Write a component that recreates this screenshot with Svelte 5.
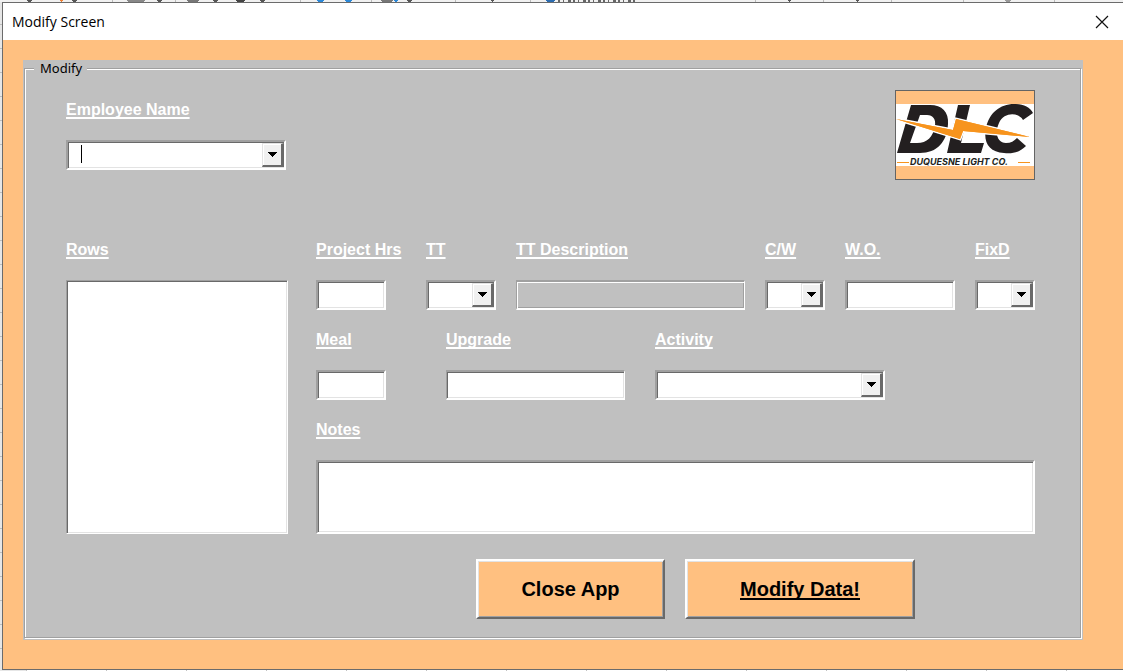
<script>
  const separators = [112, 175, 300, 371, 455, 530, 755, 823, 891, 963, 1054];
  const marks = [
    { x: 27, w: 5, c: '#555' },
    { x: 60, w: 3, c: '#ed7d31' },
    { x: 72, w: 5, c: '#555' },
    { x: 127, w: 18, c: '#888' },
    { x: 157, w: 5, c: '#555' },
    { x: 187, w: 12, c: '#777' },
    { x: 213, w: 5, c: '#555' },
    { x: 236, w: 9, c: '#444' },
    { x: 260, w: 5, c: '#555' },
    { x: 317, w: 7, c: '#2b88d8' },
    { x: 345, w: 7, c: '#2b88d8' },
    { x: 381, w: 12, c: '#777' },
    { x: 394, w: 4, c: '#2b88d8' },
    { x: 407, w: 5, c: '#555' },
    { x: 491, w: 3, c: '#555' },
    { x: 546, w: 9, c: '#2b6cb0' },
    { x: 788, w: 3, c: '#555' },
    { x: 856, w: 3, c: '#555' },
    { x: 1005, w: 6, c: '#999' }
  ];

  let employee = $state('');
  let row = $state('');
  let hours = $state('');
  let tt = $state('');
  let cw = $state('');
  let workOrder = $state('');
  let fixd = $state('');
  let meal = $state('');
  let upgrade = $state('');
  let activity = $state('');
  let notes = $state('');
</script>

{#snippet arrow()}
  <span class="arrow" aria-hidden="true">
    <svg width="10" height="5" viewBox="0 0 10 5" shape-rendering="crispEdges"><path d="M0 0H10L5 5Z" /></svg>
  </span>
{/snippet}

<div class="desktop">
  <svg class="ribbon" height="2" aria-hidden="true" shape-rendering="crispEdges">
    {#each separators as x}
      <rect {x} y="0" width="1" height="2" fill="#bbb" />
    {/each}
    {#each marks as m}
      <rect x={m.x} y="0" width={m.w} height="1" fill={m.c} />
      <rect x={m.x + 1} y="1" width={m.w - 2} height="1" fill={m.c} />
    {/each}
    <path d="M558 1H636" stroke="#666" stroke-width="2" stroke-dasharray="2 3 1 4 3 2" />
  </svg>

  <main class="dialog">
    <header class="titlebar">
      <h1>Modify Screen</h1>
      <button class="close" type="button" aria-label="Close">
        <svg width="14" height="14" viewBox="0 0 14 14"><path d="M1 1L13 13M13 1L1 13" stroke="#111" stroke-width="1.2" /></svg>
      </button>
    </header>

    <div class="surface">
      <div class="panel">
        <fieldset>
          <legend>Modify</legend>
          <div class="content">
            <div class="top">
              <div class="field employee">
                <label for="employee">Employee Name</label>
                <span class="combo">
                  <select id="employee" class="box" bind:value={employee}><option value=""></option></select>
                  {@render arrow()}
                  <span class="caret" aria-hidden="true"></span>
                </span>
              </div>
              <svg class="logo" width="140" height="90" viewBox="0 0 140 90" role="img" aria-label="Duquesne Light Co.">
                <rect width="140" height="90" fill="#ffc080" />
                <rect x="1" y="14" width="138" height="62" fill="#fff" />
                <g fill="#231f20">
                  <path fill-rule="evenodd" d="M16 15H35C47 15 54 22 53 34C52 52 42 63 25 63H2ZM25 25L15 53H22C32 53 38 47 40 36C41 29 38 25 32 25Z" />
                  <path d="M63 15H75L66 53H89L86 63H52Z" />
                  <path d="M138 23L128 30C123 22 109 22 104 33C99 44 103 53 111 53C116 53 119 51 122 48L131 56C125 62 118 64 109 63C94 62 88 52 91 38C94 23 105 14 119 14C128 14 135 17 138 23Z" />
                </g>
                <path d="M1 29L58 40L61 29L135 47L68 41L65 49Z" fill="#f7941d" stroke="#fff" stroke-width="3" paint-order="stroke" />
                <path d="M1 29L58 40L61 29L135 47L68 41L65 49Z" fill="#f7941d" />
                <path d="M2 72.500H14M123 72.500H135" stroke="#f7941d" />
                <text x="15" y="75">DUQUESNE LIGHT CO.</text>
                <rect x="0.500" y="0.500" width="139" height="89" fill="none" stroke="#646464" />
              </svg>
            </div>

            <div class="work">
              <div class="field rows">
                <label for="rows">Rows</label>
                <select id="rows" class="box list" size="8" bind:value={row}></select>
              </div>

              <div class="details">
                <div class="line first">
                  <div class="field">
                    <label for="hours">Project Hrs</label>
                    <input id="hours" class="box short" type="text" bind:value={hours} />
                  </div>
                  <div class="field">
                    <label for="tt">TT</label>
                    <span class="combo">
                      <select id="tt" class="box" bind:value={tt}><option value=""></option></select>
                      {@render arrow()}
                    </span>
                  </div>
                  <div class="field">
                    <label for="ttd">TT Description</label>
                    <input id="ttd" class="box locked" type="text" readonly />
                  </div>
                  <div class="field">
                    <label for="cw">C/W</label>
                    <span class="combo">
                      <select id="cw" class="box" bind:value={cw}><option value=""></option></select>
                      {@render arrow()}
                    </span>
                  </div>
                  <div class="field">
                    <label for="wo">W.O.</label>
                    <input id="wo" class="box" type="text" bind:value={workOrder} />
                  </div>
                  <div class="field">
                    <label for="fixd">FixD</label>
                    <span class="combo">
                      <select id="fixd" class="box" bind:value={fixd}><option value=""></option></select>
                      {@render arrow()}
                    </span>
                  </div>
                </div>

                <div class="line second">
                  <div class="field">
                    <label for="meal">Meal</label>
                    <input id="meal" class="box short" type="text" bind:value={meal} />
                  </div>
                  <div class="field">
                    <label for="upgrade">Upgrade</label>
                    <input id="upgrade" class="box thin" type="text" bind:value={upgrade} />
                  </div>
                  <div class="field">
                    <label for="activity">Activity</label>
                    <span class="combo">
                      <select id="activity" class="box" bind:value={activity}><option value=""></option></select>
                      {@render arrow()}
                    </span>
                  </div>
                </div>

                <div class="field notes">
                  <label for="notes">Notes</label>
                  <textarea id="notes" class="box" bind:value={notes}></textarea>
                </div>
              </div>
            </div>

            <div class="actions">
              <button class="action" type="button">Close App</button>
              <button class="action primary" type="button">Modify Data!</button>
            </div>
          </div>
        </fieldset>
      </div>
    </div>
  </main>
  <div class="sheet-edge" aria-hidden="true"></div>
</div>

<style>
  :global(body) {
    margin: 0;
  }

  * {
    box-sizing: border-box;
  }

  .desktop {
    display: flex;
    flex-direction: column;
    min-height: 100vh;
    padding-left: 2px;
    background: repeating-linear-gradient(#e6e6e6 0 23px, #bdbdbd 23px 24px) 0 1px;
    font-family: "Liberation Sans", Arial, sans-serif;
  }

  .ribbon {
    display: block;
    width: calc(100% + 2px);
    margin-left: -2px;
    background: #f1f1f1;
  }

  .dialog {
    flex: 1;
    display: flex;
    flex-direction: column;
    border: 1px solid #6b6b6b;
    border-right: 0;
  }

  .titlebar {
    display: flex;
    align-items: center;
    justify-content: space-between;
    height: 37px;
    padding: 0 14px 0 9px;
    background: #fff;
  }

  h1 {
    margin: 0;
    font: 400 14px/20px "Open Sans", "Segoe UI", sans-serif;
    color: #000;
  }

  .close {
    display: grid;
    padding: 0;
    border: 0;
    background: none;
  }

  .surface {
    flex: 1;
    display: flex;
    padding: 20px 40px 29px 20px;
    background: #ffc080;
  }

  .panel {
    flex: 1;
    display: flex;
    padding: 0 2px 2px 1px;
    background: #c0c0c0;
  }

  fieldset {
    flex: 1;
    display: flex;
    min-width: 0;
    margin: 0;
    padding: 0;
    border: 1px solid #a0a0a0;
    box-shadow: inset 1px 1px #fff, 1px 1px #fff;
  }

  legend {
    margin-left: 9px;
    padding: 0 5px 0 6px;
    background: #c0c0c0;
    font: 400 13px/17px "Noto Sans", Tahoma, sans-serif;
    color: #000;
  }

  .content {
    flex: 1;
    display: flex;
    flex-direction: column;
    padding: 13px 45px 18px 41px;
  }

  .top {
    display: flex;
    align-items: center;
    justify-content: space-between;
    margin-bottom: 60px;
  }

  .employee {
    width: 220px;
  }

  .logo {
    display: block;
  }

  .logo text {
    font: italic 700 9px Inter, sans-serif;
    fill: #231f20;
  }

  .field {
    display: flex;
    flex-direction: column;
    align-items: stretch;
    gap: 20px;
    min-width: 0;
  }

  label {
    align-self: flex-start;
    font-size: 16px;
    font-weight: 700;
    line-height: 20px;
    white-space: nowrap;
    color: #fff;
    text-decoration: underline 2px;
    text-underline-offset: 2px;
    text-decoration-skip-ink: none;
  }

  .box {
    width: 100%;
    height: 30px;
    margin: 0;
    padding: 2px 6px;
    border: 2px solid;
    border-color: #a0a0a0 #fff #fff #a0a0a0;
    border-radius: 0;
    outline: 0;
    appearance: none;
    background: #fff;
    box-shadow: inset 1px 1px #696969, inset -1px -1px #e3e3e3;
    font: 400 16px "Liberation Sans", Arial, sans-serif;
    color: #000;
    resize: none;
  }

  .short {
    width: 70px;
  }

  .thin {
    border-right-width: 1px;
    border-left-width: 1px;
  }

  .locked {
    border-right-width: 1px;
    border-left-width: 1px;
    background: #c0c0c0;
    box-shadow: inset 1px 1px #fff, inset -1px -1px #a0a0a0;
  }

  .combo {
    display: grid;
  }

  .combo > * {
    grid-area: 1 / 1;
  }

  .arrow {
    display: grid;
    place-items: center;
    justify-self: end;
    width: 22px;
    height: 24px;
    margin: 3px 2px 0 0;
    border: 1px solid;
    border-width: 1px 3px 2px 1px;
    border-color: #e3e3e3 #696969 #696969 #e3e3e3;
    background: #f0f0f0;
    box-shadow: inset 1px 1px #fff;
    pointer-events: none;
  }

  .caret {
    width: 1px;
    height: 18px;
    margin: 5px 0 0 15px;
    background: #000;
    pointer-events: none;
  }

  .work {
    flex: 1;
    display: grid;
    grid-template-columns: 222px minmax(0, 1fr);
    gap: 28px;
  }

  .list {
    flex: 1;
    border-width: 1px;
    overflow: auto;
  }

  .details {
    display: flex;
    flex-direction: column;
    gap: 20px;
  }

  .line {
    display: grid;
  }

  .first {
    grid-template-columns: 90px 70px minmax(0, 1fr) 60px 110px 60px;
    gap: 20px;
  }

  .second {
    grid-template-columns: 100px 179fr 230fr 120fr;
    gap: 30px;
  }

  .notes {
    flex: 1;
  }

  .notes .box {
    flex: 1;
    min-height: 74px;
  }

  .actions {
    display: flex;
    justify-content: flex-end;
    gap: 20px;
    margin-top: 25px;
    padding-right: 120px;
  }

  .action {
    width: 189px;
    height: 60px;
    border: 2px solid;
    border-color: #fff #696969 #696969 #fff;
    background: #ffc080;
    box-shadow: inset 1px 1px #e3e3e3, inset -1px -1px #a0a0a0;
    font: 700 20px "Liberation Sans", Arial, sans-serif;
    color: #000;
  }

  .primary {
    width: 230px;
    text-decoration: underline 2px;
    text-underline-offset: 2px;
    text-decoration-skip-ink: none;
  }

  .sheet-edge {
    height: 2px;
    margin-left: 24px;
    background: repeating-linear-gradient(90deg, #c4c4c4 0 1px, #fff 1px 80px);
  }
</style>
